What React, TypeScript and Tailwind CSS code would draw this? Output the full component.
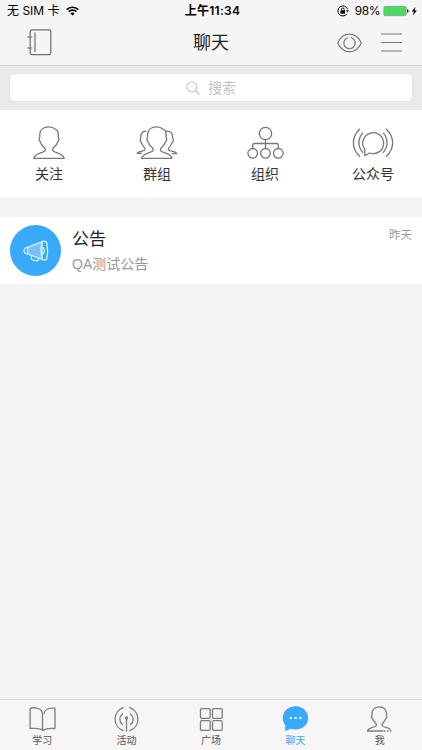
import type { ReactNode } from 'react'

const PERSON = 'M16 .9C10.300.9 6.700 3.800 6.700 8.600c0 1.200.400 1.900-.1 2.800-.9 1.200-.6 3.500.7 4.300.5 2.300 1.700 4 3.400 5.300 2 1.500 2.300 3.200.8 4.200C8.600 27.300 1.500 27.600.9 32.400h30.200c-.6-4.800-7.700-5.100-10.600-7.200-1.500-1-1.200-2.700.8-4.200 1.700-1.300 2.900-3 3.400-5.300 1.300-.8 1.600-3.100.7-4.300-.5-.9-.1-1.600-.1-2.800C25.300 5.600 24 3.700 22 3.200 20.600 1.500 18.600.9 16 .9Z'

function PersonIcon() {
  return (
    <svg width="32" height="34" viewBox="0 0 32 34" fill="none" stroke="#777" strokeWidth="1.3">
      <path d={PERSON} />
    </svg>
  )
}

function GroupIcon() {
  return (
    <svg width="42" height="34" viewBox="0 0 42 34" fill="none" stroke="#777" strokeWidth="1.3" strokeLinecap="round">
      <path d="M9.700 5.200C6.700 5.400 4.800 7.600 4.800 11c0 .8.100 1.300-.3 2-.6 1.200-.2 3.200.9 3.700.6 2.200 1.600 3.400 2.900 4.700 1.300 1.500.9 2.500-.6 3.200C5.200 25.600 1.500 25.500 1.300 27.400H5.500" />
      <path d="M30.300 5.200c3.900-.4 6.400 2 6.400 5.800 0 .8-.1 1.300.3 2 .6 1.200.2 3.200-.9 3.700-.6 2.200-1.600 3.400-2.900 4.700-1.300 1.500-.9 2.500.6 3.200 2.500 1 6.700 1.100 6.900 3H36.500" />
      <path d={PERSON} fill="#fff" transform="translate(4.800 0)" />
    </svg>
  )
}

function OrgIcon() {
  return (
    <svg width="37" height="34" viewBox="0 0 37 34" fill="none" stroke="#777" strokeWidth="1.300">
      <circle cx="18.500" cy="7.500" r="6.200" />
      <circle cx="5.700" cy="27.300" r="4.800" />
      <circle cx="18.500" cy="27.300" r="4.800" />
      <circle cx="31.300" cy="27.300" r="4.800" />
      <path d="M18.500 13.700v8.800M5.700 22.500v-3.300q0-1.700 1.700-1.700h22.200q1.700 0 1.700 1.700v3.300" />
    </svg>
  )
}

function PublicIcon() {
  return (
    <svg width="42" height="34" viewBox="0 0 42 34" fill="none" stroke="#777" strokeWidth="1.300" strokeLinecap="round" strokeLinejoin="round">
      <path d="M12.800 23.500v6.200l4.700-2.700A10.450 10.450 0 1 0 12.800 23.500Z" />
      <path d="M7.600 3.200C-.7 11-.7 22.500 7.600 30.300M10.600 7.200c-4.900 5.800-4.900 13.500 0 19.100M34.400 3.200c8.300 7.800 8.300 19.300 0 27.100M31.400 7.200c4.900 5.800 4.900 13.500 0 19.100" />
    </svg>
  )
}

function StatusBar() {
  return (
    <div className="h-5 pt-px px-[7px] grid grid-cols-[1fr_auto_1fr] items-center text-black text-[12px] leading-5 font-['Inter','Noto_Sans_CJK_SC',sans-serif]">
      <div className="flex items-center gap-[6px]">
        <span className="whitespace-pre">无 SIM 卡</span>
        <svg width="13" height="10" viewBox="0 0 13 10" fill="none" stroke="#000" strokeWidth="1.700">
          <path d="M.7 3.600a8.300 8.300 0 0 1 11.600 0M2.700 5.700a5.400 5.400 0 0 1 7.600 0" />
          <path d="M6.500 9.600 4.500 7.500a2.900 2.900 0 0 1 4 0Z" fill="#000" stroke="none" />
        </svg>
      </div>
      <span className="ml-[3px] font-semibold tracking-[0.300px]">上午11:34</span>
      <div className="flex items-center justify-end -mr-[3px]">
        <svg width="12" height="12" viewBox="0 0 12 12" fill="none" stroke="#000" className="mr-[6px]">
          <path d="M9.800 9.100A5 5 0 1 1 10.600 4.200" strokeWidth="1" />
          <path d="M9.200 5.200h2.700l-1.400 2.200Z" fill="#000" stroke="none" />
          <path d="M3.500 5.300h4.600v3.400H3.500Z" fill="#000" stroke="none" />
          <path d="M4.500 5.500V4.300a1.300 1.300 0 0 1 2.600 0v1.200" strokeWidth=".9" />
        </svg>
        <span className="tracking-[-0.500px]">98%</span>
        <svg width="35" height="12" viewBox="0 0 35 12" className="ml-[3px]">
          <rect x=".8" y="1.300" width="22.400" height="9.400" rx="1.500" fill="#4cd964" stroke="#7c9b80" strokeWidth=".6" />
          <path d="M24 4.200q1.700.300 1.700 1.800T24 7.800Z" fill="#222" />
          <path d="M32.500 1.800 28.700 6.600h2.200l-1 4 4-5.100h-2.300Z" fill="#000" />
        </svg>
      </div>
    </div>
  )
}

function NavBar() {
  return (
    <div className="h-[45px] pl-[27px] pr-5 grid grid-cols-[1fr_auto_1fr] items-center">
      <svg width="25" height="27" viewBox="0 0 25 27" fill="none" stroke="#6f6f6f" strokeWidth="1.200">
        <rect x="3.200" y=".9" width="20.600" height="24.700" rx="1.500" />
        <path d="M8 3.500v19.500M.3 8h5M.3 19h5" />
      </svg>
      <h1 className="-ml-[7px] pt-[2px] text-lg leading-[43px] text-[#222]">聊天</h1>
      <div className="flex items-center justify-end gap-[19px]">
        <svg width="25" height="20" viewBox="0 0 25 20" fill="none" stroke="#777" strokeWidth="1.200" strokeLinecap="round">
          <path d="M.7 10C3.500 4 7.500 1.200 12.500 1.200S21.500 4 24.300 10C21.500 16 17.500 18.800 12.500 18.800S3.500 16 .7 10Z" />
          <path d="M10.600 4.700a5.700 5.700 0 1 0 3.800 0" />
        </svg>
        <svg width="21" height="19" viewBox="0 0 21 19" stroke="#777" strokeWidth="1.200">
          <path d="M0 1h21M0 9.500h21M0 18h21" />
        </svg>
      </div>
    </div>
  )
}

const shortcuts: { label: string; icon: ReactNode }[] = [
  { label: '关注', icon: <PersonIcon /> },
  { label: '群组', icon: <GroupIcon /> },
  { label: '组织', icon: <OrgIcon /> },
  { label: '公众号', icon: <PublicIcon /> },
]

const tabs: { label: string; active?: boolean; icon: ReactNode }[] = [
  {
    label: '学习',
    icon: <path d="M13.500 24.500C12 21.500 6 22.300 1.100 22.500V2.700C3 1.200 13.500 1 13.500 8.500ZM15 7.300C15.500 3.800 20 1.800 26 2.200v20.300c-5 0-9.500-.5-11.500 1.800" />,
  },
  {
    label: '活动',
    icon: (
      <>
        <path d="M10.200 1.700a12.200 12.200 0 0 0 0 23M16.800 1.700a12.200 12.200 0 0 1 0 23M9.500 8a6.500 6.500 0 0 0 0 10.500M17.500 8a6.500 6.500 0 0 1 0 10.500M13.500 13v12" />
        <circle cx="13.500" cy="12" r="1" fill="#7d7d7d" />
      </>
    ),
  },
  {
    label: '广场',
    icon: (
      <>
        <rect x="2.500" y="2.600" width="9.700" height="9.700" rx="1.200" />
        <rect x="14.500" y="2.600" width="9.700" height="9.700" rx="1.200" />
        <rect x="2.500" y="14.600" width="9.700" height="9.700" rx="1.200" />
        <rect x="14.500" y="14.600" width="9.700" height="9.700" rx="1.200" />
      </>
    ),
  },
  {
    label: '聊天',
    active: true,
    icon: (
      <>
        <path d="M13.500.3C6.300.3.800 5.300.800 12c0 3 1 5.500 2.600 7.500L3 25l6-2.300c1.400.5 3 .8 4.500.8 7.200 0 12.700-5 12.700-11.500S20.700.3 13.500.3Z" fill="#38a9fb" stroke="none" />
        <path d="M7.800 11h2v2h-2ZM12.600 11h2v2h-2ZM17.400 11h2v2h-2Z" fill="#fff" stroke="none" />
      </>
    ),
  },
  {
    label: '我',
    icon: (
      <>
        <path d="M17 25H1.500c.3-2.800 4.500-3.200 7.500-4.500 1.700-.8 1.900-1.900.8-3.200-1.500-1.600-2.700-2.800-3.300-4.800-1.100-.6-1.200-2.200-.5-3.200C5.600 4 8 .8 13.200.8S21 4 20.400 9.300c.7 1 .6 2.600-.5 3.200-.6 2-1.800 3.200-3.300 4.800-1.100 1.300-.9 2.400.8 3.200 2.600 1.100 5.300 1.200 6.700 2.900" />
        <path d="M18.500 25h6.500" strokeDasharray=".7 2.200" />
      </>
    ),
  },
]

export default function App() {
  return (
    <div className="w-full h-screen flex flex-col bg-[#f4f4f4] font-['Liberation_Sans','Noto_Sans_CJK_SC',sans-serif] overflow-hidden">
      <header className="h-[66px] shrink-0 bg-[#f5f5f5] border-b border-[#d0d2d6]">
        <StatusBar />
        <NavBar />
      </header>

      <div className="h-11 shrink-0 bg-[#e9eaec] px-[9px] pt-[7px]">
        <div className="h-[29px] rounded-[5px] border border-[#e0e1e3] bg-white flex items-center justify-center text-sm text-[#c3c3c3]">
          <svg width="14" height="14" viewBox="0 0 14 14" fill="none" stroke="#c3c3c3" strokeWidth="1.100" className="mr-2">
            <circle cx="5.800" cy="5.800" r="5" />
            <path d="m9.300 9.300 4.200 4.200" />
          </svg>
          搜索
        </div>
      </div>

      <div className="h-[87px] shrink-0 bg-white px-[19px] pt-4 flex justify-between">
        {shortcuts.map(item => (
          <div key={item.label} className="w-[60px] flex flex-col items-center">
            {item.icon}
            <span className="mt-1 text-sm leading-5 text-[#333]">{item.label}</span>
          </div>
        ))}
      </div>

      <div className="mt-5 h-[67px] shrink-0 bg-white px-[10px] flex items-start">
        <div className="mt-2 size-[51px] rounded-full bg-[#38a9fb] flex items-center justify-center">
          <svg width="26" height="22" viewBox="0 0 26 22" fill="none" stroke="#e4f5ff" strokeWidth="1.200" strokeLinejoin="round">
            <path d="M4.500 7.200 19 1.700v17.600L4.500 14Z" fill="#76c3fc" />
            <path d="M4.500 7.200 2.300 8 .8 10.600 2.300 13.400l2.200.6" />
            <path d="M19 1.700q2.500-1.500 4.500.3 2.200 8.300 0 17.500-2 1.300-4.500-.2-1.800-8.500 0-17.600M20 7.300q3 3.200 0 6.800" />
            <path d="M8.500 15.500v3.200q0 1 1 1.300l4.500.8q1.300.1 1.300-1.200v-1.700" />
          </svg>
        </div>
        <div className="ml-[11px] mt-[10px] flex-1">
          <div className="text-[17px] leading-[26px] text-[#222]">公告</div>
          <div className="-mt-px text-[14px] leading-6 text-[#999]">QA测试公告</div>
        </div>
        <span className="mt-[9px] text-[11.500px] leading-[18px] text-[#999]">昨天</span>
      </div>

      <nav className="mt-auto h-[51px] shrink-0 border-t border-[#d6d6d6] bg-[#f6f6f6] flex">
        {tabs.map(tab => (
          <div key={tab.label} className="flex-1 pt-[6px] flex flex-col items-center">
            <svg width="27" height="26" viewBox="0 0 27 26" fill="none" stroke="#7d7d7d" strokeWidth="1.300" strokeLinecap="round" strokeLinejoin="round">
              {tab.icon}
            </svg>
            <span className={tab.active ? 'mt-[2px] text-[10px] leading-[14px] text-[#38a9fb]' : 'mt-[2px] text-[10px] leading-[14px] text-[#555]'}>
              {tab.label}
            </span>
          </div>
        ))}
      </nav>
    </div>
  )
}
